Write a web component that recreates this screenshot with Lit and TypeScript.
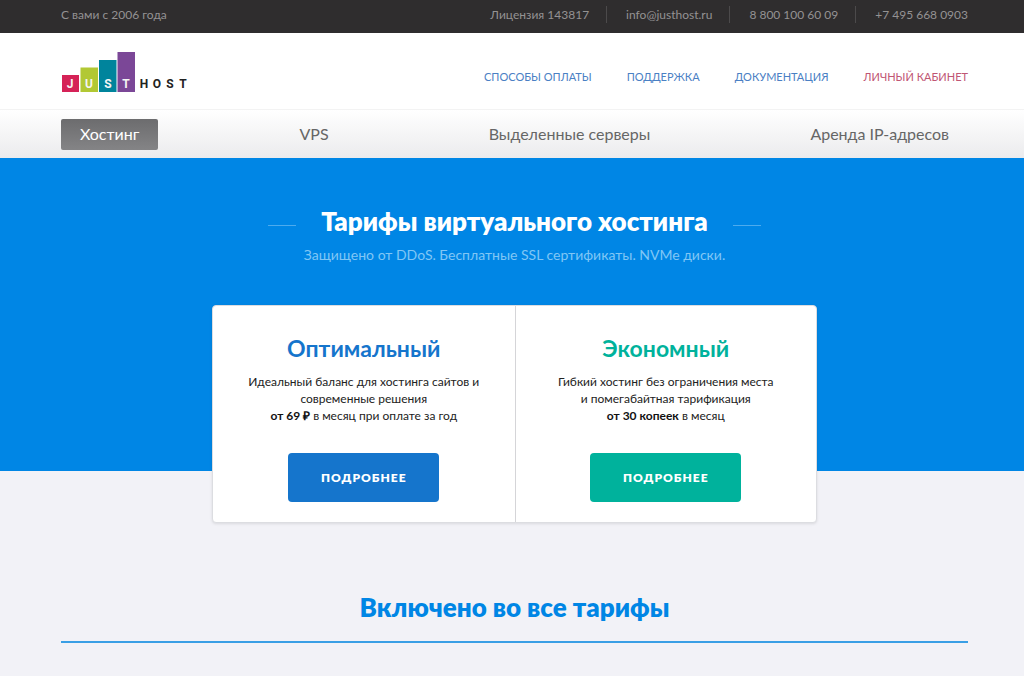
import { LitElement, html, css } from "lit";
import { customElement } from "lit/decorators.js";
import { classMap } from "lit/directives/class-map.js";

const contacts = [
  { text: "Лицензия 143817", href: "#license" },
  { text: "info@justhost.ru", href: "mailto:info@justhost.ru" },
  { text: "8 800 100 60 09", href: "tel:88001006009" },
  { text: "+7 495 668 0903", href: "tel:+74956680903" },
];

const links = [
  { text: "Способы оплаты", href: "#payment" },
  { text: "Поддержка", href: "#support" },
  { text: "Документация", href: "#docs" },
  { text: "Личный кабинет", href: "#account", accent: true },
];

const sections = [
  { text: "Хостинг", href: "#hosting", active: true },
  { text: "VPS", href: "#vps" },
  { text: "Выделенные серверы", href: "#servers" },
  { text: "Аренда IP-адресов", href: "#ip" },
];

const plans = [
  {
    name: "Оптимальный",
    lines: ["Идеальный баланс для хостинга сайтов и", "современные решения"],
    price: "от 69 ₽",
    terms: "в месяц при оплате за год",
    green: false,
  },
  {
    name: "Экономный",
    lines: ["Гибкий хостинг без ограничения места", "и помегабайтная тарификация"],
    price: "от 30 копеек",
    terms: "в месяц",
    green: true,
  },
];

@customElement("app-root")
export class AppRoot extends LitElement {
  static styles = css`
    :host {
      display: block;
      min-height: 100vh;
      background: #f2f2f7;
      font-family: Lato, "Open Sans", sans-serif;
      font-size: 12px;
      color: #222;
    }
    * {
      box-sizing: border-box;
    }
    h1, h2, p {
      margin: 0;
    }
    a {
      color: inherit;
      text-decoration: none;
    }
    .wrap {
      padding: 0 56px 0 61px;
    }
    .top {
      display: flex;
      justify-content: space-between;
      align-items: flex-start;
      height: 33px;
      padding-top: 6px;
      background: #2f2d2e;
      color: #949293;
      line-height: 18px;
    }
    .contacts {
      display: flex;
      line-height: 17px;
    }
    .contact + .contact {
      margin-left: 17px;
      padding-left: 19px;
      border-left: 1px solid #4c4a4b;
    }
    .header {
      display: flex;
      justify-content: space-between;
      align-items: center;
      height: 76px;
      background: #fff;
    }
    .logo {
      display: block;
      width: 128px;
      height: 42px;
    }
    .links {
      display: flex;
      gap: 35px;
      margin-top: 11px;
      font-size: 11px;
      line-height: 16px;
      text-transform: uppercase;
      color: #4a80c4;
    }
    .accent {
      color: #bf5674;
    }
    .menu {
      display: flex;
      justify-content: space-between;
      align-items: center;
      height: 49px;
      border-top: 1px solid #f3f3f3;
      background: linear-gradient(#fff, #ebebed);
      font-size: 16px;
      color: #666;
    }
    .item {
      padding: 0 19px 2px;
      line-height: 29px;
      border-radius: 2px;
    }
    .active {
      background: linear-gradient(#6c6c6e, #848486);
      color: #fff;
    }
    .hero {
      height: 313px;
      padding-top: 45px;
      background: #0086e5;
      text-align: center;
    }
    .title {
      display: flex;
      justify-content: center;
      align-items: center;
      gap: 25px;
      color: #fff;
      font-size: 26px;
      font-weight: 800;
      line-height: 36px;
    }
    .title::before,
    .title::after {
      content: "";
      width: 28px;
      height: 1px;
      margin-top: 8px;
      background: #4dabee;
    }
    .sub {
      margin-top: 6px;
      color: #80c6f5;
      font-size: 14px;
      line-height: 20px;
    }
    .plans {
      display: grid;
      grid-template-columns: 1fr 1fr;
      width: 66.7%;
      min-width: 560px;
      margin: -166px auto 0;
      background: #fff;
      border: 1px solid #dcdde1;
      border-radius: 4px;
      box-shadow: 0 1px 3px rgba(0, 0, 0, 0.1);
      text-align: center;
    }
    .plan {
      padding: 27px 16px 20px;
    }
    .plan + .plan {
      border-left: 1px solid #d5d5d8;
    }
    .name {
      color: #1575cc;
      font-size: 23px;
      font-weight: 700;
      line-height: 30px;
    }
    .text {
      margin-top: 10px;
      line-height: 17px;
    }
    .line {
      display: block;
    }
    .price {
      color: #111;
    }
    .more {
      width: 151px;
      height: 49px;
      margin-top: 29px;
      padding: 0;
      border: 0;
      border-radius: 4px;
      background: #1575cc;
      color: #fff;
      font: 800 12px/49px Lato, "Open Sans", sans-serif;
      letter-spacing: 1px;
      text-transform: uppercase;
      cursor: pointer;
    }
    .green .name {
      color: #00b29c;
    }
    .green .more {
      background: #00b29c;
    }
    .included {
      margin-top: 66px;
    }
    .heading {
      padding-bottom: 16px;
      border-bottom: 2px solid #3a9fe5;
      color: #0086e5;
      font-size: 26px;
      font-weight: 800;
      line-height: 36px;
      text-align: center;
    }
    .mark {
      font-family: Roboto, "Liberation Sans", sans-serif;
      font-size: 12px;
      font-weight: 700;
      text-anchor: middle;
    }
  `;

  render() {
    return html`
      <div class="top wrap">
        <span>С вами с 2006 года</span>
        <div class="contacts">
          ${contacts.map((c) => html`<a class="contact" href=${c.href}>${c.text}</a>`)}
        </div>
      </div>
      <header class="header wrap">
        <a href="#home" aria-label="JustHost">
          <svg class="logo" viewBox="0 0 128 42">
            <rect x="1" y="25" width="17" height="17" fill="#d52257" />
            <rect x="19.5" y="17.500" width="17.500" height="24.500" fill="#b2c834" />
            <rect x="38" y="10" width="17.500" height="32" fill="#00849c" />
            <rect x="56.500" y="2" width="17.500" height="40" fill="#7b4797" />
            <g class="mark" fill="#f4f4f4">
              <text x="9" y="38">J</text>
              <text x="28" y="38">U</text>
              <text x="47" y="38">S</text>
              <text x="65" y="38">T</text>
            </g>
            <g class="mark" fill="#222">
              <text x="83" y="38">H</text>
              <text x="96" y="38">O</text>
              <text x="109" y="38">S</text>
              <text x="122" y="38">T</text>
            </g>
          </svg>
        </a>
        <nav class="links">
          ${links.map(
            (l) => html`<a class=${classMap({ accent: !!l.accent })} href=${l.href}>${l.text}</a>`
          )}
        </nav>
      </header>
      <nav class="menu wrap">
        ${sections.map(
          (s) => html`<a class=${classMap({ item: true, active: !!s.active })} href=${s.href}>${s.text}</a>`
        )}
      </nav>
      <main>
        <section class="hero wrap">
          <h1 class="title">Тарифы виртуального хостинга</h1>
          <p class="sub">Защищено от DDoS. Бесплатные SSL сертификаты. NVMe диски.</p>
        </section>
        <div class="wrap">
          <div class="plans">
            ${plans.map(
              (p) => html`
                <article class=${classMap({ plan: true, green: p.green })}>
                  <h2 class="name">${p.name}</h2>
                  <p class="text">
                    ${p.lines.map((t) => html`<span class="line">${t}</span>`)}
                    <span class="line"><b class="price">${p.price}</b> ${p.terms}</span>
                  </p>
                  <button class="more" type="button">Подробнее</button>
                </article>
              `
            )}
          </div>
          <section class="included">
            <h2 class="heading">Включено во все тарифы</h2>
          </section>
        </div>
      </main>
    `;
  }
}
